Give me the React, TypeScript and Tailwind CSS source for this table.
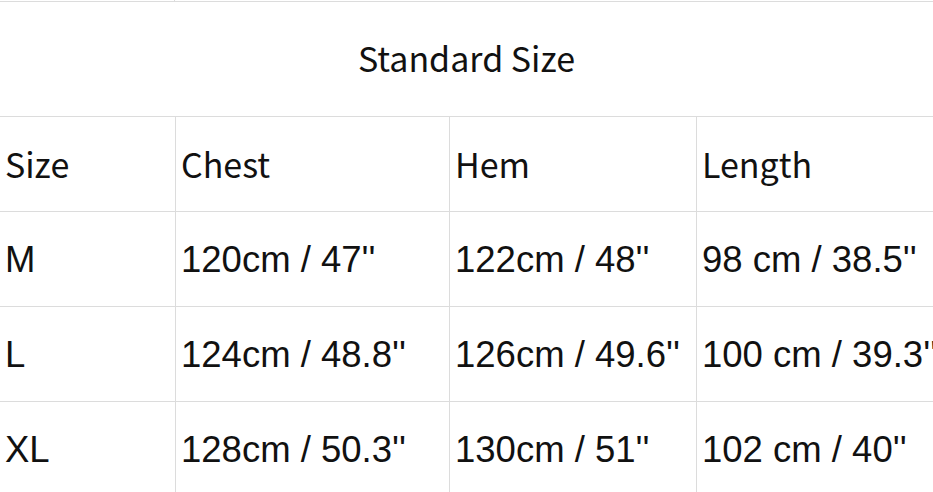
import React from "react";

const rows = [
  ["M", "120cm / 47''", "122cm / 48''", "98 cm / 38.5''"],
  ["L", "124cm / 48.8''", "126cm / 49.6''", "100 cm / 39.3''"],
  ["XL", "128cm / 50.3''", "130cm / 51''", "102 cm / 40''"],
];

const cols = ["w-[176px]", "w-[274px]", "w-[247px]", "w-[260px]"];

export default function App() {
  return (
    <div className="w-[933px] h-[492px] overflow-hidden bg-white text-[#111]">
      <div className="w-[960px]">
        <div className="h-px flex">
          <div className="w-[175px] border-r border-[#dcdcdc]" />
        </div>
        <div
          className="w-[933px] h-[115px] border-t border-[#dcdcdc] flex items-center justify-center text-[34px] pb-[4px]"
          style={{ fontFamily: "'Noto Sans CJK SC', sans-serif" }}
        >
          Standard Size
        </div>
        <div
          className="flex h-[95px] border-t border-[#dcdcdc] text-[34px]"
          style={{ fontFamily: "'Noto Sans CJK SC', sans-serif" }}
        >
          {["Size", "Chest", "Hem", "Length"].map((h, i) => (
            <div
              key={h}
              className={`${cols[i]} shrink-0 flex items-center pl-[5px] pb-[2px] ${i < 3 ? "border-r border-[#dcdcdc]" : ""}`}
            >
              {h}
            </div>
          ))}
        </div>
        {rows.map((r) => (
          <div
            key={r[0]}
            className="flex h-[95px] border-t border-[#dcdcdc] text-[36.5px]"
            style={{ fontFamily: "'Liberation Sans', Arial, sans-serif" }}
          >
            {r.map((c, i) => (
              <div
                key={i}
                className={`${cols[i]} shrink-0 flex items-center pl-[5px] pt-[3px] whitespace-nowrap ${i < 3 ? "border-r border-[#dcdcdc]" : ""}`}
              >
                {c}
              </div>
            ))}
          </div>
        ))}
      </div>
    </div>
  );
}
